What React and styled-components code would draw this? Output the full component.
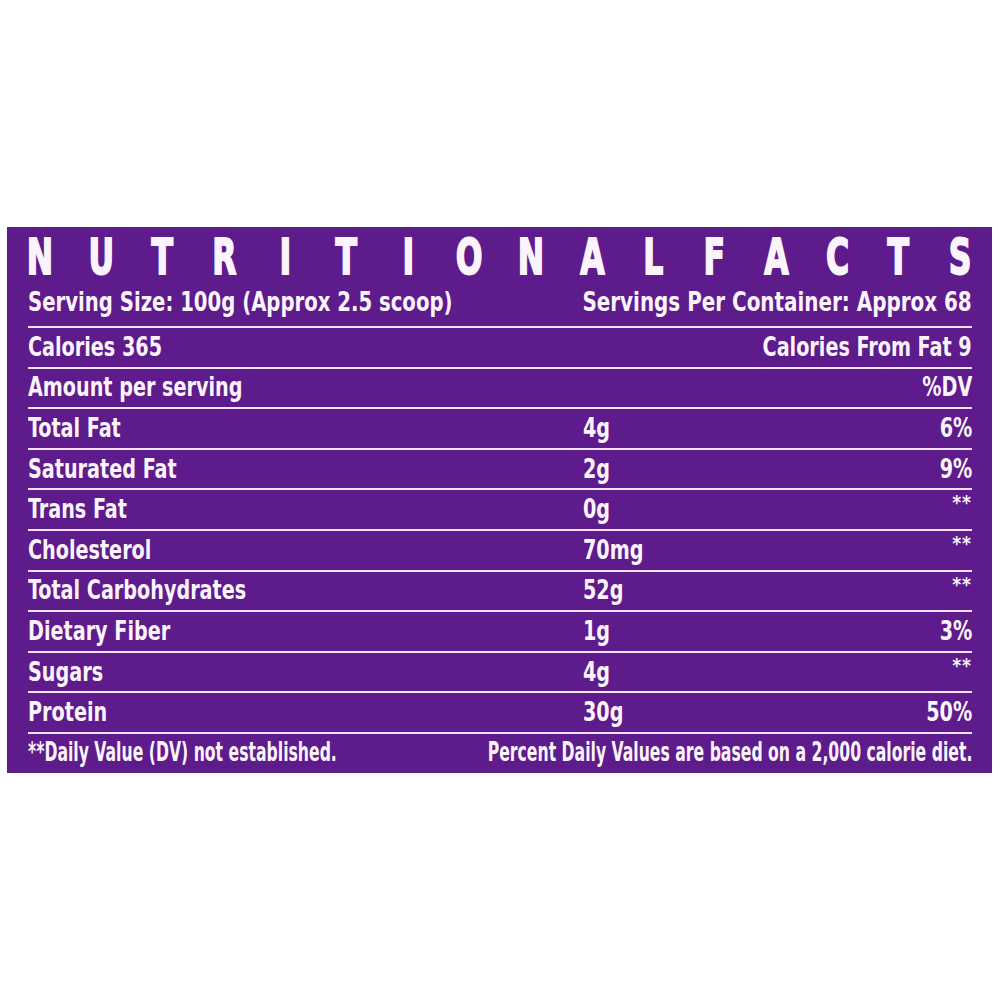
import styled, { createGlobalStyle } from 'styled-components';

const GlobalStyle = createGlobalStyle`
  body {
    margin: 0;
    background: #ffffff;
    font-family: 'DejaVu Sans Condensed', 'DejaVu Sans', 'Liberation Sans', sans-serif;
  }
`;

const title = 'NUTRITIONALFACTS'.split('');

const rows = [
  { name: 'Total Fat', amount: '4g', dv: '6%' },
  { name: 'Saturated Fat', amount: '2g', dv: '9%' },
  { name: 'Trans Fat', amount: '0g', dv: '**' },
  { name: 'Cholesterol', amount: '70mg', dv: '**' },
  { name: 'Total Carbohydrates', amount: '52g', dv: '**' },
  { name: 'Dietary Fiber', amount: '1g', dv: '3%' },
  { name: 'Sugars', amount: '4g', dv: '**' },
  { name: 'Protein', amount: '30g', dv: '50%' },
];

export default function App() {
  return (
    <>
      <GlobalStyle />
      <Page>
        <Label>
          <Title>
            {title.map((ch, i) => (
              <Letter key={i}>
                <span>{ch}</span>
              </Letter>
            ))}
          </Title>
          <Serving>
            <Side>
              <Text $scale={0.81}>Serving Size: 100g (Approx 2.5 scoop)</Text>
            </Side>
            <Side $right>
              <Text $right $scale={0.82}>Servings Per Container: Approx 68</Text>
            </Side>
          </Serving>
          <Table>
            <Row>
              <Text>Calories 365</Text>
              <span />
              <Text $right>Calories From Fat 9</Text>
            </Row>
            <Row>
              <Text>Amount per serving</Text>
              <span />
              <Text $right>%DV</Text>
            </Row>
            {rows.map((r) => (
              <Row key={r.name}>
                <Text>{r.name}</Text>
                <Text>{r.amount}</Text>
                {r.dv === '**' ? <Stars>**</Stars> : <Text $right>{r.dv}</Text>}
              </Row>
            ))}
          </Table>
          <Footer>
            <Side>
              <Text $scale={0.67}>**Daily Value (DV) not established.</Text>
            </Side>
            <Side $right>
              <Text $right $scale={0.67}>
                Percent Daily Values are based on a 2,000 calorie diet.
              </Text>
            </Side>
          </Footer>
        </Label>
      </Page>
    </>
  );
}

const Page = styled.div`
  width: 1000px;
  height: 1000px;
  display: flex;
  align-items: center;
  justify-content: center;
`;

const Label = styled.section`
  width: 985px;
  height: 546px;
  box-sizing: border-box;
  margin-left: -1px;
  padding: 0 20px 0 21px;
  background: #5e1b8b;
  color: #fbf4fc;
  display: flex;
  flex-direction: column;
  font-weight: 700;
`;

const Title = styled.h1`
  margin: 0;
  height: 55px;
  display: flex;
  justify-content: space-between;
  align-items: flex-end;
  font-size: 50px;
  line-height: 1;
  font-weight: 700;

  span {
    display: inline-block;
    transform: scaleX(0.7);
    -webkit-text-stroke: 1.8px #fbf4fc;
  }
`;

const Letter = styled.div`
  width: 24px;
  display: flex;
  justify-content: center;
`;

const Text = styled.span`
  display: inline-block;
  white-space: nowrap;
  transform: scaleX(${(p) => p.$scale || 0.79});
  transform-origin: ${(p) => (p.$right ? 'right' : 'left')} center;
  justify-self: ${(p) => (p.$right ? 'end' : 'start')};
`;

const Side = styled.div`
  min-width: 0;
  display: flex;
  justify-content: ${(p) => (p.$right ? 'flex-end' : 'flex-start')};
`;

const Serving = styled.div`
  height: 44px;
  display: grid;
  grid-template-columns: minmax(0, 1fr) minmax(0, 1fr);
  align-items: center;
  font-size: 27px;
  padding-bottom: 5px;
  box-sizing: border-box;
`;

const Table = styled.div`
  border-top: 2px solid #f3e3f7;
  display: flex;
  flex-direction: column;
`;

const Row = styled.div`
  height: 40.6px;
  box-sizing: border-box;
  border-bottom: 2px solid #f3e3f7;
  display: grid;
  grid-template-columns: 555px 1fr auto;
  align-items: center;
  font-size: 27px;
  padding-bottom: 2px;
`;

const Stars = styled.span`
  align-self: start;
  justify-self: end;
  margin-top: 1px;
  font-size: 19px;
  line-height: 22px;
  letter-spacing: 1px;
`;

const Footer = styled.div`
  flex: 1;
  display: grid;
  grid-template-columns: minmax(0, 1fr) minmax(0, 1fr);
  align-items: center;
  font-size: 26px;
  padding-bottom: 2px;
`;
